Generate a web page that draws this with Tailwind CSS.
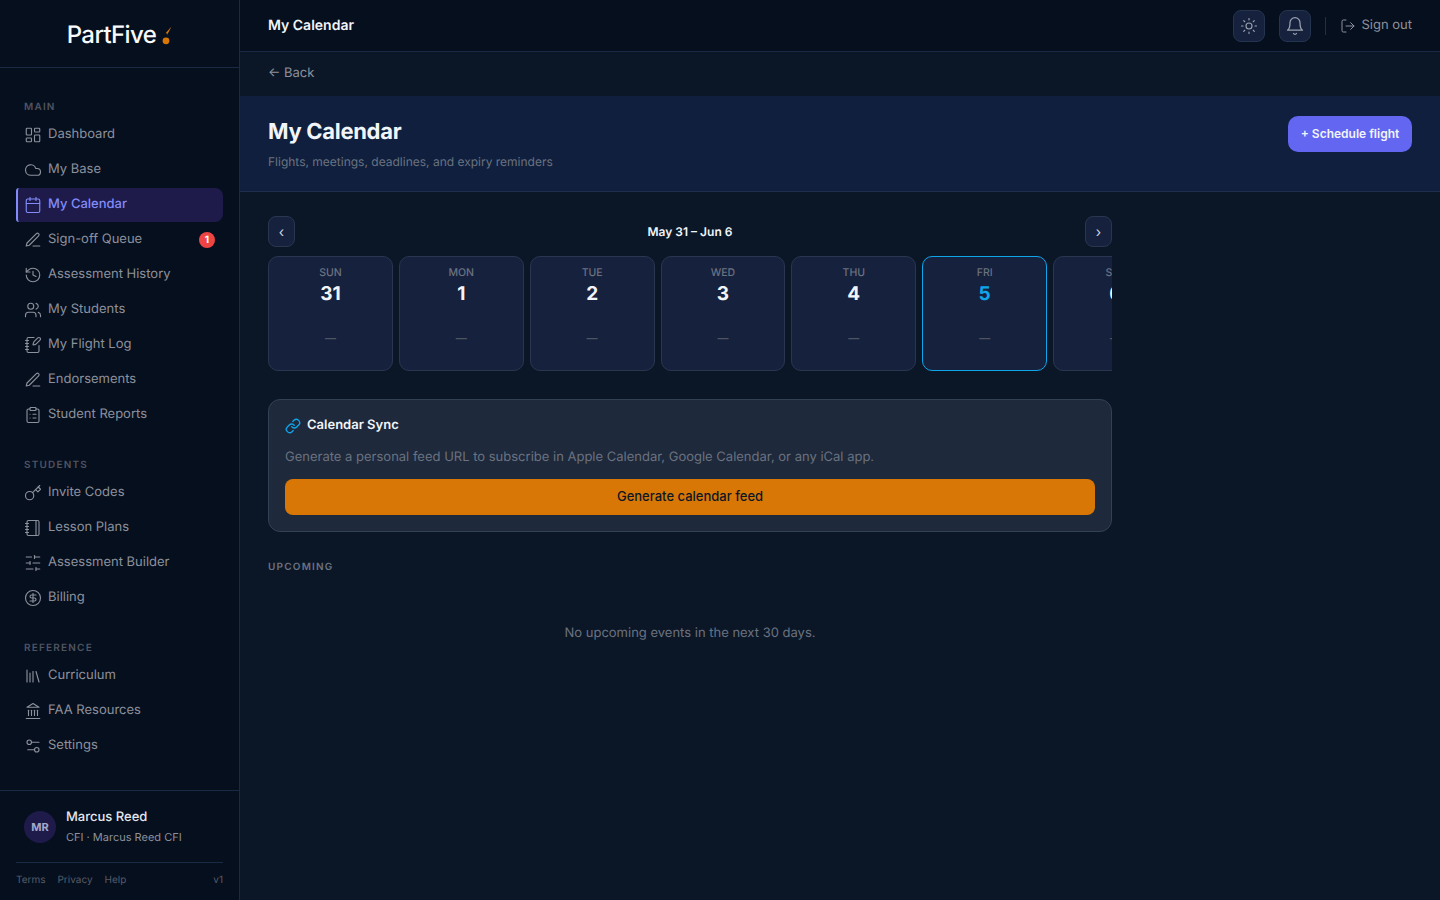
<!DOCTYPE html>
<html lang="en">
<head>
    <meta charset="UTF-8">
    <title>My Calendar</title>
    <script src="https://cdn.jsdelivr.net/npm/@tailwindcss/browser@4"></script>
</head>
<body class="bg-[#0b1727] font-['Inter',sans-serif] overflow-hidden antialiased [text-rendering:geometricPrecision]">
<div class="flex h-[900px] w-[1440px]">

    <!-- Sidebar -->
    <aside class="flex h-full w-[240px] shrink-0 flex-col border-r border-[#1a2a45] bg-[#060f1e]">
        <div class="flex h-[68px] shrink-0 items-center justify-center gap-[6px] border-b border-[#1a2a45] pt-[3px]">
            <span class="text-[24px] leading-none font-medium tracking-[-0.6px] text-[#f8fafc]">PartFive</span>
            <svg class="mt-[2px] h-[20px] w-[10px]" viewBox="0 0 10 20"><path d="M9.5 0.5 3.6 7.2 5.4 7.6 4.8 9.6Z" fill="#d97706"/><circle cx="4" cy="14.8" r="3.4" fill="#d97706"/></svg>
        </div>

        <nav class="flex-1 px-4 pt-[32px] text-[13px] text-[#8d919c]">
            <div class="mb-[3px] h-[15px] px-2 text-[10px] leading-[15px] font-semibold tracking-[1.2px] text-[#4f5461]">MAIN</div>
            <a class="flex h-[34px] items-center gap-[6px] pl-2 mb-[1px]"><svg class="h-[18px] w-[18px]" viewBox="0 0 24 24" fill="none" stroke="currentColor" stroke-width="1.5" stroke-linecap="round" stroke-linejoin="round"><rect x="3" y="3" width="7" height="9" rx="1"/><rect x="14" y="3" width="7" height="5" rx="1"/><rect x="14" y="12" width="7" height="9" rx="1"/><rect x="3" y="16" width="7" height="5" rx="1"/></svg>Dashboard</a>
            <a class="flex h-[34px] items-center gap-[6px] pl-2 mb-[1px]"><svg class="h-[18px] w-[18px]" viewBox="0 0 24 24" fill="none" stroke="currentColor" stroke-width="1.5" stroke-linecap="round" stroke-linejoin="round"><path d="M17.5 19H9a7 7 0 1 1 6.71-9h1.79a4.5 4.5 0 1 1 0 9Z"/></svg>My Base</a>
            <a class="mb-[1px] flex h-[34px] items-center gap-[6px] rounded-r-lg rounded-l-[3px] border-l-2 border-[#818cf8] bg-[#1e1b4b] pl-[6px] font-medium text-[#818cf8]"><svg class="h-[18px] w-[18px]" viewBox="0 0 24 24" fill="none" stroke="currentColor" stroke-width="1.5" stroke-linecap="round" stroke-linejoin="round"><path d="M8 2v4"/><path d="M16 2v4"/><rect x="3" y="4" width="18" height="18" rx="2"/><path d="M3 10h18"/></svg>My Calendar</a>
            <a class="flex h-[34px] items-center gap-[6px] pl-2 pr-2 mb-[1px]"><svg class="h-[18px] w-[18px]" viewBox="0 0 24 24" fill="none" stroke="currentColor" stroke-width="1.5" stroke-linecap="round" stroke-linejoin="round"><path d="M12 20h9"/><path d="M16.5 3.5a2.12 2.12 0 0 1 3 3L7 19l-4 1 1-4Z"/></svg>Sign-off Queue<span class="ml-auto flex h-[16px] w-[16px] items-center justify-center rounded-full bg-[#ef4444] text-[10px] font-bold text-white">1</span></a>
            <a class="flex h-[34px] items-center gap-[6px] pl-2 mb-[1px]"><svg class="h-[18px] w-[18px]" viewBox="0 0 24 24" fill="none" stroke="currentColor" stroke-width="1.5" stroke-linecap="round" stroke-linejoin="round"><path d="M3 12a9 9 0 1 0 9-9 9.75 9.75 0 0 0-6.74 2.74L3 8"/><path d="M3 3v5h5"/><path d="M12 7v5l4 2"/></svg>Assessment History</a>
            <a class="flex h-[34px] items-center gap-[6px] pl-2 mb-[1px]"><svg class="h-[18px] w-[18px]" viewBox="0 0 24 24" fill="none" stroke="currentColor" stroke-width="1.5" stroke-linecap="round" stroke-linejoin="round"><path d="M16 21v-2a4 4 0 0 0-4-4H6a4 4 0 0 0-4 4v2"/><circle cx="9" cy="7" r="4"/><path d="M22 21v-2a4 4 0 0 0-3-3.87"/><path d="M16 3.13a4 4 0 0 1 0 7.75"/></svg>My Students</a>
            <a class="flex h-[34px] items-center gap-[6px] pl-2 mb-[1px]"><svg class="h-[18px] w-[18px]" viewBox="0 0 24 24" fill="none" stroke="currentColor" stroke-width="1.5" stroke-linecap="round" stroke-linejoin="round"><path d="M13.4 2H6a2 2 0 0 0-2 2v16a2 2 0 0 0 2 2h12a2 2 0 0 0 2-2v-7.4"/><path d="M2 6h4"/><path d="M2 10h4"/><path d="M2 14h4"/><path d="M2 18h4"/><path d="M21.378 5.626a1 1 0 1 0-3.004-3.004l-5.01 5.012a2 2 0 0 0-.506.854l-.837 2.87a.5.5 0 0 0 .62.62l2.87-.837a2 2 0 0 0 .854-.506z"/></svg>My Flight Log</a>
            <a class="flex h-[34px] items-center gap-[6px] pl-2 mb-[1px]"><svg class="h-[18px] w-[18px]" viewBox="0 0 24 24" fill="none" stroke="currentColor" stroke-width="1.5" stroke-linecap="round" stroke-linejoin="round"><path d="M12 20h9"/><path d="M16.5 3.5a2.12 2.12 0 0 1 3 3L7 19l-4 1 1-4Z"/></svg>Endorsements</a>
            <a class="flex h-[34px] items-center gap-[6px] pl-2 mb-[1px]"><svg class="h-[18px] w-[18px]" viewBox="0 0 24 24" fill="none" stroke="currentColor" stroke-width="1.5" stroke-linecap="round" stroke-linejoin="round"><rect x="8" y="2" width="8" height="4" rx="1"/><path d="M16 4h2a2 2 0 0 1 2 2v14a2 2 0 0 1-2 2H6a2 2 0 0 1-2-2V6a2 2 0 0 1 2-2h2"/><path d="M12 11h4"/><path d="M12 16h4"/><path d="M8 11h.01"/><path d="M8 16h.01"/></svg>Student Reports</a>

            <div class="mt-[26px] mb-[3px] h-[15px] px-2 text-[10px] leading-[15px] font-semibold tracking-[1.2px] text-[#4f5461]">STUDENTS</div>
            <a class="flex h-[34px] items-center gap-[6px] pl-2 mb-[1px]"><svg class="h-[18px] w-[18px]" viewBox="0 0 24 24" fill="none" stroke="currentColor" stroke-width="1.5" stroke-linecap="round" stroke-linejoin="round"><circle cx="7.5" cy="15.5" r="5.5"/><path d="m21 2-9.6 9.6"/><path d="m15.5 7.5 3 3L22 7l-3-3"/></svg>Invite Codes</a>
            <a class="flex h-[34px] items-center gap-[6px] pl-2 mb-[1px]"><svg class="h-[18px] w-[18px]" viewBox="0 0 24 24" fill="none" stroke="currentColor" stroke-width="1.5" stroke-linecap="round" stroke-linejoin="round"><path d="M2 6h4"/><path d="M2 10h4"/><path d="M2 14h4"/><path d="M2 18h4"/><rect x="4" y="2" width="16" height="20" rx="2"/><path d="M16 2v20"/></svg>Lesson Plans</a>
            <a class="flex h-[34px] items-center gap-[6px] pl-2 mb-[1px]"><svg class="h-[18px] w-[18px]" viewBox="0 0 24 24" fill="none" stroke="currentColor" stroke-width="1.5" stroke-linecap="round" stroke-linejoin="round"><path d="M21 4h-7"/><path d="M10 4H3"/><path d="M21 12h-9"/><path d="M8 12H3"/><path d="M21 20h-5"/><path d="M12 20H3"/><path d="M14 2v4"/><path d="M8 10v4"/><path d="M16 18v4"/></svg>Assessment Builder</a>
            <a class="flex h-[34px] items-center gap-[6px] pl-2 mb-[1px]"><svg class="h-[18px] w-[18px]" viewBox="0 0 24 24" fill="none" stroke="currentColor" stroke-width="1.5" stroke-linecap="round" stroke-linejoin="round"><circle cx="12" cy="12" r="10"/><path d="M16 8h-6a2 2 0 1 0 0 4h4a2 2 0 1 1 0 4H8"/><path d="M12 18V6"/></svg>Billing</a>

            <div class="mt-[26px] mb-[3px] h-[15px] px-2 text-[10px] leading-[15px] font-semibold tracking-[1.2px] text-[#4f5461]">REFERENCE</div>
            <a class="flex h-[34px] items-center gap-[6px] pl-2 mb-[1px]"><svg class="h-[18px] w-[18px]" viewBox="0 0 24 24" fill="none" stroke="currentColor" stroke-width="1.5" stroke-linecap="round" stroke-linejoin="round"><path d="m16 6 4 14"/><path d="M12 6v14"/><path d="M8 8v12"/><path d="M4 4v16"/></svg>Curriculum</a>
            <a class="flex h-[34px] items-center gap-[6px] pl-2 mb-[1px]"><svg class="h-[18px] w-[18px]" viewBox="0 0 24 24" fill="none" stroke="currentColor" stroke-width="1.5" stroke-linecap="round" stroke-linejoin="round"><path d="M3 22h18"/><path d="M6 18v-7"/><path d="M10 18v-7"/><path d="M14 18v-7"/><path d="M18 18v-7"/><path d="M12 2l8 5H4z"/></svg>FAA Resources</a>
            <a class="flex h-[34px] items-center gap-[6px] pl-2 mb-[1px]"><svg class="h-[18px] w-[18px]" viewBox="0 0 24 24" fill="none" stroke="currentColor" stroke-width="1.5" stroke-linecap="round" stroke-linejoin="round"><path d="M20 7h-9"/><path d="M14 17H5"/><circle cx="17" cy="17" r="3"/><circle cx="7" cy="7" r="3"/></svg>Settings</a>
        </nav>

        <div class="h-[110px] shrink-0 border-t border-[#1a2a45] px-4 pt-[16px]">
            <div class="flex items-center gap-[10px] px-2">
                <div class="flex h-[32px] w-[32px] items-center justify-center rounded-full bg-[#1e1b4b] text-[11px] font-bold text-[#a5a8c8]">MR</div>
                <div>
                    <div class="text-[13px] leading-[20px] font-medium text-[#e2e8f0]">Marcus Reed</div>
                    <div class="text-[11px] leading-[20px] text-[#8d919c]">CFI · Marcus Reed CFI</div>
                </div>
            </div>
            <div class="mt-[15px] flex justify-between border-t border-[#1a2a45] pt-[10px] text-[10px] leading-[15px] text-[#565b67]">
                <div class="flex gap-[12px]"><span>Terms</span><span>Privacy</span><span>Help</span></div>
                <span>v1</span>
            </div>
        </div>
    </aside>

    <!-- Main -->
    <div class="flex min-w-0 flex-1 flex-col">
        <header class="flex h-[52px] shrink-0 items-center justify-between border-b border-[#1a2a45] bg-[#060f1e] px-[28px]">
            <span class="text-[14px] font-semibold text-[#f1f5f9]">My Calendar</span>
            <div class="flex items-center">
                <button class="flex h-[32px] w-[32px] items-center justify-center rounded-lg border border-[#24344f] bg-[#16213e] text-[#9ca3af]"><svg class="h-[18px] w-[18px]" viewBox="0 0 24 24" fill="none" stroke="currentColor" stroke-width="1.5" stroke-linecap="round" stroke-linejoin="round"><circle cx="12" cy="12" r="4"/><path d="M12 2v2"/><path d="M12 20v2"/><path d="m4.93 4.93 1.41 1.41"/><path d="m17.66 17.66 1.41 1.41"/><path d="M2 12h2"/><path d="M20 12h2"/><path d="m6.34 17.66-1.41 1.41"/><path d="m19.07 4.93-1.41 1.41"/></svg></button>
                <button class="ml-[14px] flex h-[32px] w-[32px] items-center justify-center rounded-lg border border-[#24344f] bg-[#16213e] text-[#9ca3af]"><svg class="h-[20px] w-[20px]" viewBox="0 0 24 24" fill="none" stroke="currentColor" stroke-width="1.5" stroke-linecap="round" stroke-linejoin="round"><path d="M6 8a6 6 0 0 1 12 0c0 7 3 9 3 9H3s3-2 3-9"/><path d="M10.3 21a1.94 1.94 0 0 0 3.4 0"/></svg></button>
                <div class="mx-[14px] h-[18px] w-px bg-[#1f2f4a]"></div>
                <a class="flex items-center gap-[5px] text-[13px] text-[#8d919c]"><svg class="h-[16px] w-[16px]" viewBox="0 0 24 24" fill="none" stroke="currentColor" stroke-width="1.5" stroke-linecap="round" stroke-linejoin="round"><path d="M9 21H5a2 2 0 0 1-2-2V5a2 2 0 0 1 2-2h4"/><path d="m16 17 5-5-5-5"/><path d="M21 12H9"/></svg>Sign out</a>
            </div>
        </header>

        <div class="flex h-[44px] shrink-0 items-center px-[28px] text-[13px] text-[#8d919c]">← Back</div>

        <section class="flex h-[96px] shrink-0 items-start justify-between border-b border-[#1e2f4d] bg-[#0f1f3d] px-[28px] pt-[20px]">
            <div>
                <h1 class="text-[22px] leading-[32px] font-bold tracking-[-0.3px] text-[#f1f5f9]">My Calendar</h1>
                <p class="mt-[4px] text-[12px] leading-[19px] text-[#6b7280]">Flights, meetings, deadlines, and expiry reminders</p>
            </div>
            <button class="h-[36px] w-[124px] rounded-[10px] bg-[#6366f1] text-[12px] font-semibold text-[#f1f5f9]">+ Schedule flight</button>
        </section>

        <main class="w-[900px] px-[28px] pt-[24px]">
            <div class="flex h-[31px] items-center justify-between">
                <button class="flex h-[31px] w-[27px] items-center justify-center rounded-lg border border-[#2a3650] bg-[#16213e] text-[14px] text-[#cbd5e1]">‹</button>
                <span class="text-[12px] leading-[31px] font-semibold text-[#f1f5f9]">May 31 – Jun 6</span>
                <button class="flex h-[31px] w-[27px] items-center justify-center rounded-lg border border-[#2a3650] bg-[#16213e] text-[14px] text-[#cbd5e1]">›</button>
            </div>

            <div class="mt-[9px] flex gap-[6px] overflow-hidden">
                <div class="flex h-[115px] w-[124.85px] shrink-0 flex-col items-center rounded-[10px] border border-[#2a3650] bg-[#16213e] pt-[8px]"><span class="text-[10.5px] leading-[15px] font-medium text-[#6b7280]">SUN</span><span class="mt-[1px] text-[19px] leading-[26px] font-bold text-[#f1f5f9]">31</span><span class="mt-[21px] text-[11px] leading-[20px] font-medium text-[#4f5461]">—</span></div>
                <div class="flex h-[115px] w-[124.85px] shrink-0 flex-col items-center rounded-[10px] border border-[#2a3650] bg-[#16213e] pt-[8px]"><span class="text-[10.5px] leading-[15px] font-medium text-[#6b7280]">MON</span><span class="mt-[1px] text-[19px] leading-[26px] font-bold text-[#f1f5f9]">1</span><span class="mt-[21px] text-[11px] leading-[20px] font-medium text-[#4f5461]">—</span></div>
                <div class="flex h-[115px] w-[124.85px] shrink-0 flex-col items-center rounded-[10px] border border-[#2a3650] bg-[#16213e] pt-[8px]"><span class="text-[10.5px] leading-[15px] font-medium text-[#6b7280]">TUE</span><span class="mt-[1px] text-[19px] leading-[26px] font-bold text-[#f1f5f9]">2</span><span class="mt-[21px] text-[11px] leading-[20px] font-medium text-[#4f5461]">—</span></div>
                <div class="flex h-[115px] w-[124.85px] shrink-0 flex-col items-center rounded-[10px] border border-[#2a3650] bg-[#16213e] pt-[8px]"><span class="text-[10.5px] leading-[15px] font-medium text-[#6b7280]">WED</span><span class="mt-[1px] text-[19px] leading-[26px] font-bold text-[#f1f5f9]">3</span><span class="mt-[21px] text-[11px] leading-[20px] font-medium text-[#4f5461]">—</span></div>
                <div class="flex h-[115px] w-[124.85px] shrink-0 flex-col items-center rounded-[10px] border border-[#2a3650] bg-[#16213e] pt-[8px]"><span class="text-[10.5px] leading-[15px] font-medium text-[#6b7280]">THU</span><span class="mt-[1px] text-[19px] leading-[26px] font-bold text-[#f1f5f9]">4</span><span class="mt-[21px] text-[11px] leading-[20px] font-medium text-[#4f5461]">—</span></div>
                <div class="flex h-[115px] w-[124.85px] shrink-0 flex-col items-center rounded-[10px] border border-[#0ea5e9] bg-[#16213e] pt-[8px]"><span class="text-[10.5px] leading-[15px] font-medium text-[#6b7280]">FRI</span><span class="mt-[1px] text-[19px] leading-[26px] font-bold text-[#0ea5e9]">5</span><span class="mt-[21px] text-[11px] leading-[20px] font-medium text-[#4f5461]">—</span></div>
                <div class="flex h-[115px] w-[124.85px] shrink-0 flex-col items-center rounded-[10px] border border-[#2a3650] bg-[#16213e] pt-[8px]"><span class="text-[10.5px] leading-[15px] font-medium text-[#6b7280]">SAT</span><span class="mt-[1px] text-[19px] leading-[26px] font-bold text-[#f1f5f9]">6</span><span class="mt-[21px] text-[11px] leading-[20px] font-medium text-[#4f5461]">—</span></div>
            </div>

            <div class="mt-[28px] h-[133px] rounded-xl border border-[#334155] bg-[#1e293b] px-4 pt-[16px]">
                <div class="flex h-[20px] items-center gap-[6px] text-[13px] font-semibold text-[#f1f5f9]">
                    <svg class="h-[16px] w-[16px] text-[#0ea5e9]" viewBox="0 0 24 24" fill="none" stroke="currentColor" stroke-width="2" stroke-linecap="round" stroke-linejoin="round"><path d="M10 13a5 5 0 0 0 7.54.54l3-3a5 5 0 0 0-7.07-7.07l-1.72 1.71"/><path d="M14 11a5 5 0 0 0-7.54-.54l-3 3a5 5 0 0 0 7.07 7.07l1.71-1.71"/></svg>
                    Calendar Sync
                </div>
                <p class="mt-[11px] text-[13px] leading-[20px] text-[#6b7280]">Generate a personal feed URL to subscribe in Apple Calendar, Google Calendar, or any iCal app.</p>
                <button class="mt-[12px] h-[36px] w-full rounded-lg bg-[#d97706] text-[13px] font-medium text-[#0b1727]">Generate calendar feed</button>
            </div>

            <div class="mt-[28px] text-[10px] leading-[15px] font-semibold tracking-[1.2px] text-[#6b7280]">UPCOMING</div>
            <p class="mt-[48px] text-center text-[13px] leading-[20px] text-[#6b7280]">No upcoming events in the next 30 days.</p>
        </main>
    </div>
</div>
</body>
</html>
